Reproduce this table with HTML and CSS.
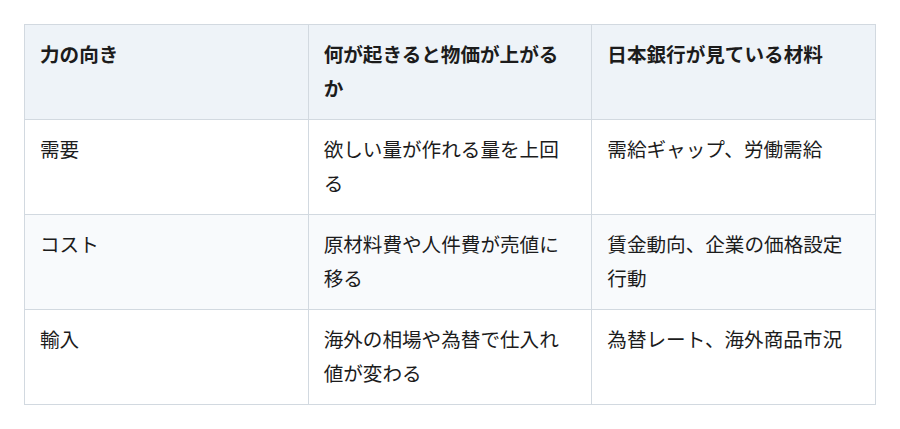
FILE: index.html
```html
<!DOCTYPE html>
<html lang="ja">
<head>
<meta charset="utf-8">
<link rel="stylesheet" href="styles.css">
</head>
<body>
<table class="grid">
  <thead>
    <tr>
      <th>力の向き</th>
      <th>何が起きると物価が上がるか</th>
      <th>日本銀行が見ている材料</th>
    </tr>
  </thead>
  <tbody>
    <tr>
      <td>需要</td>
      <td>欲しい量が作れる量を上回る</td>
      <td>需給ギャップ、労働需給</td>
    </tr>
    <tr class="alt">
      <td>コスト</td>
      <td>原材料費や人件費が売値に移る</td>
      <td>賃金動向、企業の価格設定行動</td>
    </tr>
    <tr>
      <td>輸入</td>
      <td>海外の相場や為替で仕入れ値が変わる</td>
      <td>為替レート、海外商品市況</td>
    </tr>
  </tbody>
</table>
</body>
</html>
```

FILE: styles.css
```css
html, body {
  margin: 0;
  background: #ffffff;
}
body {
  padding: 24px;
  font-family: "Noto Sans CJK JP", "Noto Sans", sans-serif;
  color: #1c1c1c;
}
.grid {
  width: 852px;
  border-collapse: collapse;
  table-layout: fixed;
  font-size: 19.6px;
  line-height: 34px;
}
.grid th,
.grid td {
  border: 1px solid #d2d9e0;
  padding: 12px 15px 14px;
  text-align: left;
  vertical-align: top;
  height: 68px;
}
.grid th {
  background: #eef3f8;
  font-weight: 700;
}
.grid td {
  font-weight: 400;
}
.grid tr.alt td {
  background: #f8fafc;
}
```
